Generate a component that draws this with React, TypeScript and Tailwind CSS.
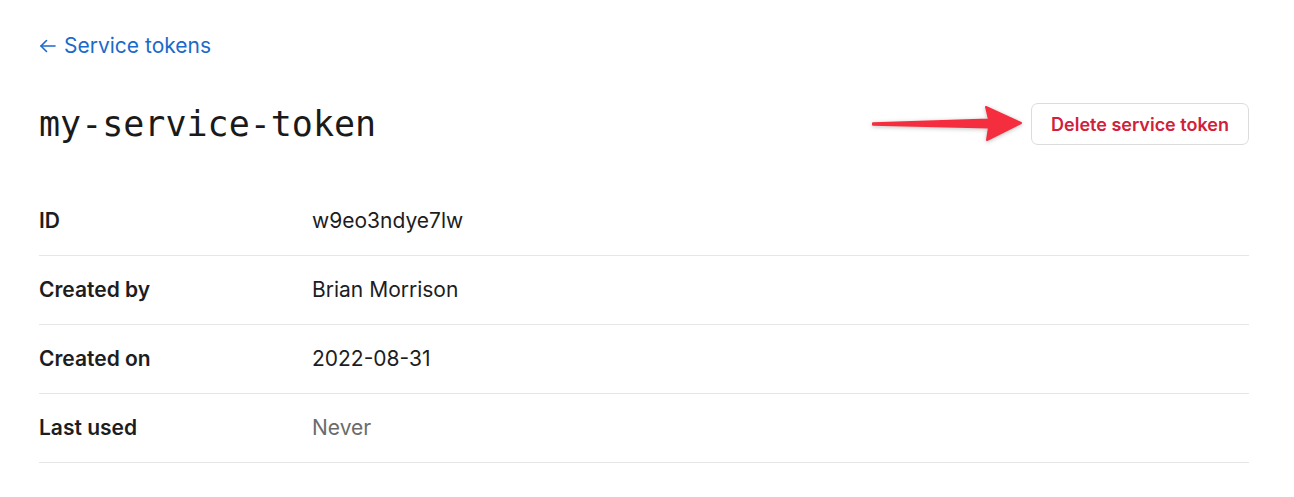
import React from "react";

const rows: { label: string; value: string; muted?: boolean }[] = [
  { label: "ID", value: "w9eo3ndye7lw" },
  { label: "Created by", value: "Brian Morrison" },
  { label: "Created on", value: "2022-08-31" },
  { label: "Last used", value: "Never", muted: true },
];

export default function App() {
  return (
    <div className="min-h-[497px] w-[1294px] bg-white font-['Inter','Noto_Sans',sans-serif] text-[#1d1d1f]">
      <div className="w-[1210px] ml-[39px] pt-[34px]">
        <a className="flex items-center gap-[8px] text-[21px] leading-[24px] text-[#1b6ac9]" href="#">
          <svg width="17" height="14" viewBox="0 0 17 14" fill="none" stroke="#1b6ac9" strokeWidth="1.6" strokeLinecap="round" strokeLinejoin="round">
            <path d="M16 7H2" />
            <path d="M7.5 1.5L2 7l5.5 5.5" />
          </svg>
          <span>Service tokens</span>
        </a>
        <div className="mt-[45px] flex items-center justify-between h-[42px]">
          <h1 className="font-['DejaVu_Sans_Mono',monospace] text-[35px] leading-[42px] text-[#1a1a1a]">my-service-token</h1>
          <div className="flex items-center gap-[8px]">
            <svg width="152" height="42" viewBox="0 0 152 42" className="drop-shadow-[0_1px_2px_rgba(0,0,0,0.25)]">
              <path d="M2 20.2 L118 16.5 L115 4 L150 20 L116 37 L118 24.5 L2 21.8 Z" fill="#f52e3f" stroke="#f52e3f" strokeWidth="2" strokeLinejoin="round" />
            </svg>
            <button className="h-[42px] w-[218px] rounded-[7px] border border-[#dcdcdc] bg-white text-[18px] font-semibold text-[#d2203a]">
              Delete service token
            </button>
          </div>
        </div>
        <div className="mt-[42px]">
          {rows.map((r) => (
            <div key={r.label} className="flex items-center h-[69px] border-b border-[#e6e6e6] text-[21px]">
              <div className="w-[273px] font-semibold text-[#1d1d1f]">{r.label}</div>
              <div className={r.muted ? "text-[#6b6b6b]" : "text-[#1d1d1f]"}>{r.value}</div>
            </div>
          ))}
        </div>
      </div>
    </div>
  );
}
